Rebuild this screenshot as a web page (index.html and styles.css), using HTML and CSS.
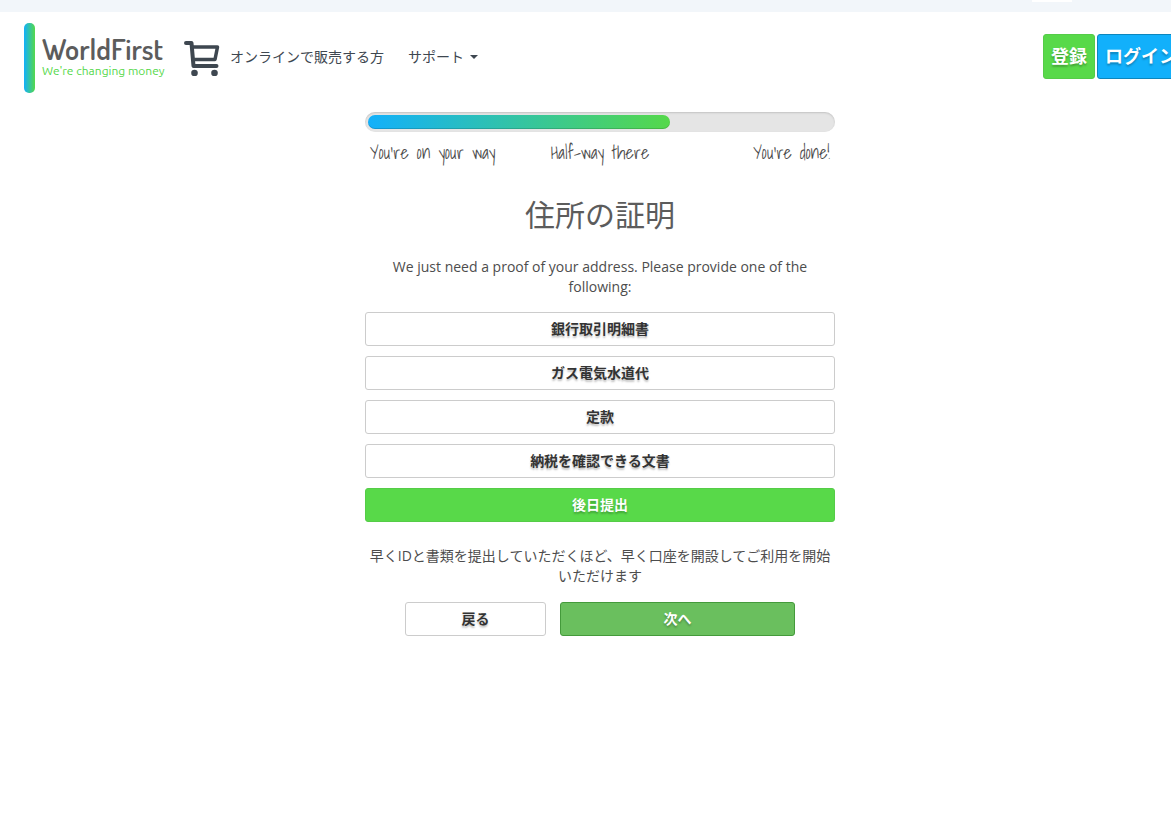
FILE: index.html
```html
<!DOCTYPE html>
<html lang="ja">
<head>
    <meta charset="UTF-8">
    <title>住所の証明 - WorldFirst</title>
    <link rel="stylesheet" href="styles.css">
</head>
<body>

<div class="page">
    <div class="topbar"><span class="topbar-tab"></span></div>

    <header class="header">
        <a class="logo" href="#" aria-label="WorldFirst">
            <span class="logo-bar"></span>
            <span class="logo-text">
                <span class="logo-name">WorldFirst</span>
                <span class="logo-tagline">We're changing money</span>
            </span>
        </a>

        <nav class="nav">
            <a class="nav-link" href="#">
                <svg class="cart" width="36" height="38" viewBox="0 0 36 38" fill="none" stroke="#3e4750" stroke-width="4" stroke-linecap="round" stroke-linejoin="round">
                    <path d="M2 5H7.500L9.500 28H32.500"/>
                    <path d="M8 9H33.500L31 21.500H9.500" stroke-width="3.500"/>
                    <circle cx="10.500" cy="35" r="3.300" fill="#3e4750" stroke="none"/>
                    <circle cx="30.500" cy="35" r="3.300" fill="#3e4750" stroke="none"/>
                </svg>
                <span>オンラインで販売する方</span>
            </a>
            <a class="nav-link nav-menu" href="#">サポート <span class="caret"></span></a>
        </nav>

        <div class="account">
            <button class="btn btn-large btn-green">登録</button>
            <button class="btn btn-large btn-blue">ログイン</button>
        </div>
    </header>

    <main class="content">
        <div class="progress">
            <div class="progress-bar"></div>
        </div>
        <div class="steps">
            <span>You're on your way</span>
            <span>Half-way there</span>
            <span>You're done!</span>
        </div>

        <h1>住所の証明</h1>
        <p class="intro">We just need a proof of your address. Please provide one of the following:</p>

        <div class="options">
            <button class="btn">銀行取引明細書</button>
            <button class="btn">ガス電気水道代</button>
            <button class="btn">定款</button>
            <button class="btn">納税を確認できる文書</button>
            <button class="btn btn-green">後日提出</button>
        </div>

        <p class="note">早くIDと書類を提出していただくほど、早く口座を開設してご利用を開始いただけます</p>

        <div class="actions">
            <button class="btn">戻る</button>
            <button class="btn btn-next">次へ</button>
        </div>
    </main>
</div>

</body>
</html>
```

FILE: styles.css
```css
* {
    box-sizing: border-box;
}

body {
    margin: 0;
    overflow-x: hidden;
    background: #fff;
    color: #4d4d4d;
    font-family: "Open Sans", "Noto Sans CJK JP", sans-serif;
    font-size: 14px;
    line-height: 20px;
}

a {
    color: #3e4750;
    text-decoration: none;
}

.page {
    min-width: 1200px;
}

.topbar {
    display: flex;
    justify-content: flex-end;
    height: 12px;
    padding-right: 128px;
    background: #f2f6fa;
}

.topbar-tab {
    width: 40px;
    height: 2px;
    background: #fff;
}

.header {
    display: flex;
    align-items: center;
    height: 90px;
    padding: 0 15px 0 24px;
}

.logo {
    display: flex;
    align-items: center;
    gap: 7px;
    width: 160px;
    padding-top: 2px;
}

.logo-bar {
    flex: none;
    width: 11px;
    height: 70px;
    border-radius: 5px;
    background: linear-gradient(to right, #12b0fb, #55d84a);
}

.logo-text {
    display: flex;
    flex-direction: column;
    padding-bottom: 2px;
    white-space: nowrap;
}

.logo-name {
    color: #5c5c5c;
    font-family: "Dosis", "Open Sans", sans-serif;
    font-size: 29px;
    font-weight: 600;
    line-height: 28px;
}

.logo-tagline {
    color: #55d84a;
    font-family: "Ubuntu", "Open Sans", sans-serif;
    font-size: 12px;
    line-height: 16px;
}

.nav {
    display: flex;
    gap: 24px;
}

.nav-link {
    display: flex;
    align-items: center;
    gap: 10px;
}

.nav-menu {
    gap: 6px;
}

.caret {
    border-top: 4px solid #3e4750;
    border-left: 4px solid transparent;
    border-right: 4px solid transparent;
}

.account {
    display: flex;
    gap: 2px;
    margin-left: auto;
    padding-bottom: 2px;
}

.btn {
    height: 34px;
    padding: 0 12px 2px;
    border: 1px solid #ccc;
    border-radius: 3px;
    background: #fff;
    color: #333;
    font-family: inherit;
    font-size: 14px;
    font-weight: bold;
    text-shadow: 0 2px 2px rgba(0, 0, 0, 0.25);
    cursor: pointer;
}

.btn-large {
    height: 45px;
    padding: 0 7px 3px;
    font-size: 18px;
}

.btn-green {
    border-color: #55cc48;
    background: #58d949;
    color: #fff;
}

.btn-blue {
    border-color: #0d86bd;
    background: #12b0fb;
    color: #fff;
}

.content {
    width: 470px;
    margin: 10px auto 0;
    text-align: center;
}

.progress {
    height: 20px;
    padding: 3px;
    border-radius: 10px;
    background: #e5e5e5;
    box-shadow: inset 0 1px 2px rgba(0, 0, 0, 0.15);
}

.progress-bar {
    width: 65%;
    height: 14px;
    border-radius: 7px;
    background: linear-gradient(to right, #12b0fb, #55d84a);
    box-shadow: inset 0 -1px 0 rgba(0, 0, 0, 0.15);
}

.steps {
    display: grid;
    grid-template-columns: 1fr 1fr 1fr;
    padding: 11px 5px;
    font-family: "Shadows Into Light", cursive;
    font-size: 18px;
}

.steps span:first-child {
    text-align: left;
}

.steps span:last-child {
    text-align: right;
}

h1 {
    margin: 24px 0 26px;
    color: #5c5c5c;
    font-size: 30px;
    font-weight: normal;
    line-height: 33px;
}

.intro {
    margin: 0 0 15px;
    padding: 0 15px;
}

.options {
    display: flex;
    flex-direction: column;
    gap: 10px;
}

.note {
    margin: 24px 0 16px;
}

.actions {
    display: grid;
    grid-template-columns: 3fr 5fr;
    gap: 14px;
    padding: 0 40px;
}

.btn-next {
    border-color: #449a3b;
    background: #6abf5e;
    color: #fff;
}
```
